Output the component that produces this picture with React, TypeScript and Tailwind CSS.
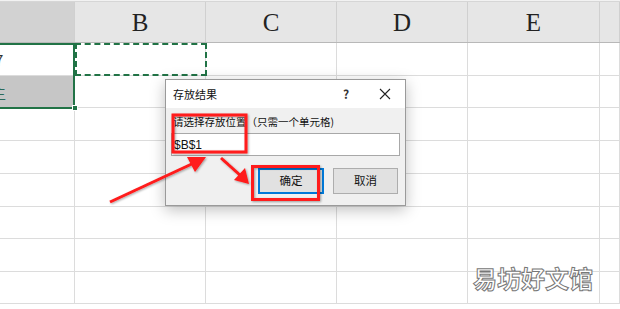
import React from 'react';

const cols = 'grid grid-cols-[75px_131px_131px_131px_132px_20px]';
const rowHeights = [33, 32, 33, 33, 33, 32, 33, 32];

function HeaderRow() {
  const letters = ['', 'B', 'C', 'D', 'E', ''];
  return (
    <div className={`${cols} h-[41px] bg-[#e6e6e6] border-b border-[#b8b8b8]`}>
      {letters.map((l, i) => (
        <div
          key={i}
          className={`flex items-center justify-center border-r border-[#d0d0d0] text-[25px] leading-none text-[#222] ${i === 0 ? 'bg-[#d2d2d2]' : ''}`}
          style={{ fontFamily: '"Liberation Serif", serif' }}
        >
          {l}
        </div>
      ))}
    </div>
  );
}

function SheetRow({ h, idx }: { h: number; idx: number }) {
  return (
    <div className={cols} style={{ height: h }}>
      {[0, 1, 2, 3, 4, 5].map((c) => (
        <div
          key={c}
          className={`relative overflow-hidden border-r border-b border-[#dcdcdc] ${idx === 1 && c === 0 ? 'bg-[#c6c6c6]' : ''}`}
        >
          {c === 0 && idx === 0 && (
            <span className="absolute left-[-5px] top-[6px] text-[15px] text-[#333]">7</span>
          )}
          {c === 0 && idx === 1 && (
            <span className="absolute left-[-9px] top-[6px] text-[15px] text-[#2a6a5a]" style={{ fontFamily: '"Noto Sans CJK SC", sans-serif' }}>主</span>
          )}
        </div>
      ))}
    </div>
  );
}

function Dialog() {
  return (
    <div
      className="absolute left-[165px] top-[79px] w-[241px] h-[127px] bg-[#f0f0f0] border border-[#9a9a9a] shadow-[0_4px_14px_rgba(0,0,0,0.25)] flex flex-col"
      style={{ fontFamily: '"Noto Sans CJK SC", "Noto Sans", sans-serif' }}
    >
      <div className="h-[28px] bg-white flex items-center pl-[7px] text-[11px] text-[#111]">
        <span className="flex-1">存放结果</span>
        <span className="w-[20px] text-[12px] font-bold text-[#333] mr-[16px]">?</span>
        <svg width="12" height="12" viewBox="0 0 12 12" className="mr-[14px]">
          <path d="M1 1L11 11M11 1L1 11" stroke="#222" strokeWidth="1.1" />
        </svg>
      </div>
      <div className="flex flex-col px-[5px] pt-[6px]">
        <div className="text-[10.5px] text-[#111] leading-[15px] pl-[2px]">请选择存放位置（只需一个单元格)</div>
        <div className="mt-[4px] h-[23px] bg-white border border-[#a8a8a8] flex items-center pl-[2px] text-[12px] text-[#111]" style={{ fontFamily: '"Liberation Sans", sans-serif' }}>
          $B$1
        </div>
        <div className="flex justify-end gap-[9px] mt-[12px] pr-[2px]">
          <button className="w-[66px] h-[26px] bg-[#e1e1e1] border-2 border-[#0078d7] text-[11.5px] text-[#111] flex items-center justify-center">确定</button>
          <button className="w-[65px] h-[26px] bg-[#e1e1e1] border border-[#adadad] text-[11.5px] text-[#111] flex items-center justify-center">取消</button>
        </div>
      </div>
    </div>
  );
}

function Annotations() {
  return (
    <svg className="absolute left-0 top-0 pointer-events-none" width="620" height="309">
      <defs>
        <filter id="sh" x="-20%" y="-20%" width="140%" height="140%">
          <feDropShadow dx="1" dy="1" stdDeviation="1" floodColor="#000" floodOpacity="0.35" />
        </filter>
      </defs>
      <g filter="url(#sh)">
        <rect x="173" y="115" width="73" height="37" fill="none" stroke="#ff1a1a" strokeWidth="3" />
        <rect x="252.5" y="166.5" width="66" height="33" fill="none" stroke="#ff1a1a" strokeWidth="3" />
        <line x1="110" y1="202" x2="196" y2="162" stroke="#ff1a1a" strokeWidth="3" />
        <polygon points="206,157 187,157 195,172" fill="#ff1a1a" />
        <line x1="221" y1="158" x2="241" y2="176" stroke="#ff1a1a" strokeWidth="3" />
        <polygon points="249,184 234,180 245,168" fill="#ff1a1a" />
      </g>
    </svg>
  );
}

export default function App() {
  return (
    <div className="relative w-[620px] h-[309px] overflow-hidden bg-white" style={{ fontFamily: '"Noto Sans CJK SC", sans-serif' }}>
      <div className="h-[2px] bg-[#f2f2f2] border-b border-[#d6d6d6]" />
      <HeaderRow />
      {rowHeights.map((h, i) => (
        <SheetRow key={i} h={h} idx={i} />
      ))}

      {/* selection A1:A2 */}
      <div className="absolute left-[-2px] top-[43px] w-[77px] h-[66px] border-2 border-[#217346]" />
      <div className="absolute left-[72px] top-[105px] w-[6px] h-[6px] bg-[#217346] border border-white" />
      {/* copy marquee on B1 */}
      <div className="absolute left-[75px] top-[43px] w-[132px] h-[33px] border-2 border-dashed border-[#217346]" />

      <Dialog />
      <Annotations />

      <div
        className="absolute left-[473px] top-[266px] text-[24px] leading-none text-white font-bold [-webkit-text-stroke:1px_#777]"
        style={{ fontFamily: '"Noto Sans CJK SC", sans-serif' }}
      >
        易坊好文馆
      </div>
    </div>
  );
}
